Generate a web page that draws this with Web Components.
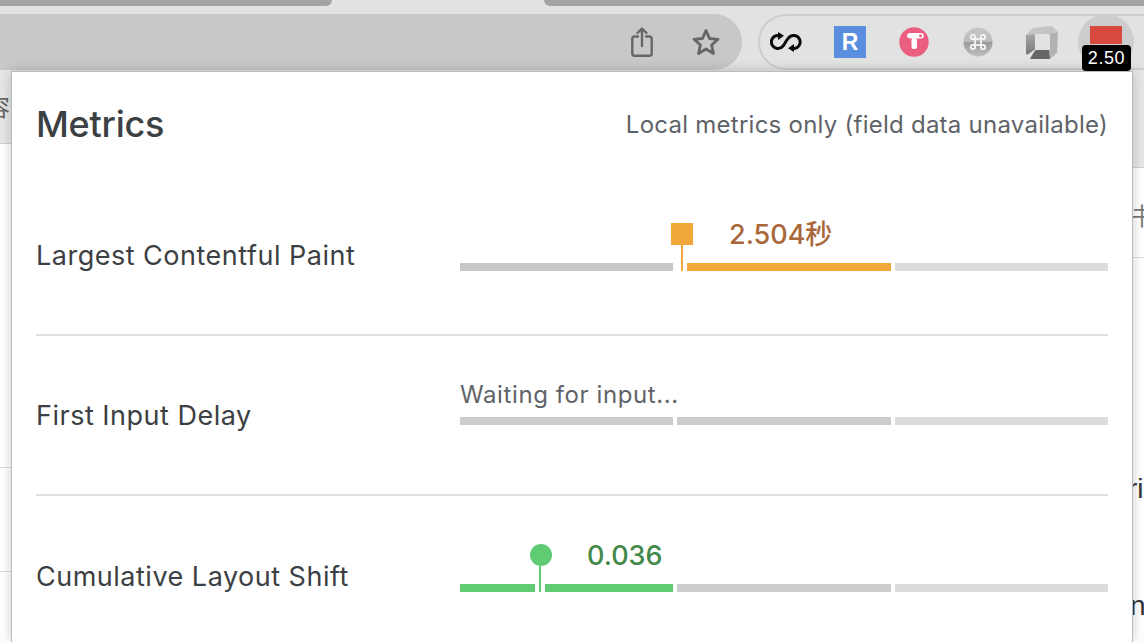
<!DOCTYPE html>
<html>
<head>
<meta charset="utf-8">
<title>Metrics</title>
<style>
  html, body { margin: 0; height: 100%; overflow: hidden; background: #fff; }
  body { font-family: "Inter", "Liberation Sans", "Noto Sans CJK SC", sans-serif; }
</style>
</head>
<body>
<browser-window>
  <metrics-popup>
    <metric-row label="Largest Contentful Paint" value="2.504秒" state="warn" shape="square"
      segs="good,warn,rest" pos="221"></metric-row>
    <metric-row label="First Input Delay" waiting="Waiting for input..." segs="idle,idle,rest"></metric-row>
    <metric-row label="Cumulative Layout Shift" value="0.036" state="good" shape="circle"
      segs="good-on,idle,rest" pos="79" last></metric-row>
  </metrics-popup>
</browser-window>

<script>
class BrowserWindow extends HTMLElement {
  constructor() {
    super();
    this.attachShadow({ mode: 'open' });
    this.shadowRoot.innerHTML = `
    <style>
      :host { display: block; position: relative; width: 1144px; height: 642px; overflow: hidden; background: #fff; font-family: "Inter", "Liberation Sans", "Noto Sans CJK SC", sans-serif; }
      .tabs { display: flex; height: 6px; background: #e2e2e2; }
      .tab { background: #a3a3a3; }
      .tab.one { width: 332px; border-radius: 0 0 10px 0; }
      .tab.two { flex: 1; margin-left: 212px; border-radius: 0 0 0 10px; }
      .bar { display: flex; align-items: flex-end; height: 64px; background: #e2e2e2; box-sizing: border-box; }
      .url { flex: none; width: 742px; height: 56px; background: #c8c8c8; border-radius: 0 28px 28px 0; display: flex; align-items: center; justify-content: flex-end; gap: 38px; padding-right: 21px; box-sizing: border-box; }
      .exts { flex: 1; margin-left: 16px; height: 56px; border: 2px solid #cdcdcd; border-right: 0; border-radius: 28px 0 0 28px; box-sizing: border-box; display: flex; align-items: center; padding-left: 6px; gap: 24px; }
      .ext { width: 40px; height: 40px; display: flex; align-items: center; justify-content: center; flex: none; }
      .ext svg { display: block; }
      .badge-ext { position: absolute; left: 1078px; top: 14px; width: 56px; height: 56px; border-radius: 50%; background: #cdcdcd; }
      .badge-ext i { position: absolute; left: 12px; top: 12px; width: 32px; height: 18px; background: #d64a40; }
      .badge-ext b { position: absolute; left: 4px; top: 31px; width: 49px; height: 26px; border-radius: 4px; background: #000; color: #fff; font: 400 18px/27px "Liberation Sans", sans-serif; text-align: center; letter-spacing: .6px; z-index: 2; }
      .page { position: relative; height: 572px; color: #555; }
      .strip { height: 74px; background: #e6e6e6; border-bottom: 1px solid #cfcfcf; box-sizing: border-box; font-size: 24px; overflow: hidden; }
      .strip span { display: block; color: #666; font-family: "Noto Sans CJK SC", sans-serif; margin: 22px 0 0 -14px; line-height: 28px; }
      .side { position: absolute; font: 28px "Liberation Sans", "Noto Sans CJK SC", sans-serif; color: #333; }
      .line { position: absolute; height: 1px; background: #d9d9d9; width: 12px; }
      .line.right { left: 1132px; }
      .line.left { left: 0; }
      .right-strip { position: absolute; left: 1132px; top: 70px; width: 12px; height: 97px; background: #e6e6e6; border-bottom: 1px solid #cfcfcf; }
      .rest-glyph { position: absolute; left: 1131px; top: 197px; color: #777; font: 24px "Noto Sans CJK SC", sans-serif; line-height: 36px; }
      ::slotted(metrics-popup) { position: absolute; left: 11px; top: 71px; }
    </style>
    <div class="tabs"><div class="tab one"></div><div class="tab two"></div></div>
    <div class="bar">
      <div class="url">
        <svg width="22" height="30" viewBox="0 0 22 30" fill="none" stroke="#666" stroke-width="2.400" stroke-linecap="round" stroke-linejoin="round"><path d="M7 9.500H3.500a2.200 2.200 0 0 0-2.200 2.200V26.500a2.200 2.200 0 0 0 2.200 2.200h15a2.200 2.200 0 0 0 2.200-2.200V11.700a2.200 2.200 0 0 0-2.200-2.200H15"/><path d="M11 19V1.800M6.500 6 11 1.500 15.500 6"/></svg>
        <svg width="30" height="30" viewBox="0 0 30 30" fill="none" stroke="#666" stroke-width="2.800" stroke-linejoin="round"><path d="M15 3.500 18.500 11.500 27 12.300 20.600 18 22.500 26.500 15 22 7.500 26.500 9.400 18 3 12.300 11.500 11.500Z"/></svg>
      </div>
      <div class="exts">
        <div class="ext"><svg width="32" height="20" viewBox="0 0 32 20"><path d="M8.500 3.500A6.500 6.500 0 1 0 13 14C15 11.500 16 8.500 18.500 6A6.500 6.500 0 1 1 23.500 16.500" fill="none" stroke="#0a0a0a" stroke-width="3"/><path d="M8 0 14 3.800 8 8Z" fill="#0a0a0a"/><path d="M24 12 18 16.200 24 20Z" fill="#0a0a0a"/></svg></div>
        <div class="ext"><div style="width:32px;height:32px;background:#5a8fdf;color:#fff;font:700 23px/33px 'Liberation Sans',sans-serif;text-align:center">R</div></div>
        <div class="ext"><svg width="30" height="30" viewBox="0 0 30 30"><circle cx="15" cy="15" r="14.700" fill="#ea5e80"/><path d="M8 8.800C8 7 9.500 6 11 6H22a2.600 2.600 0 0 1 0 5.500H11.500C9.500 11.500 8 10.500 8 8.800Z" fill="#fff"/><circle cx="21.500" cy="8.700" r="1.500" fill="#ea5e80"/><rect x="12.500" y="11" width="5.500" height="11" rx="2.200" fill="#fff"/></svg></div>
        <div class="ext"><svg width="30" height="30" viewBox="0 0 30 30"><defs><linearGradient id="cmd" x1="0" y1="0" x2="0" y2="1"><stop offset="0" stop-color="#c8c8c8"/><stop offset=".48" stop-color="#bbb"/><stop offset=".52" stop-color="#999"/><stop offset="1" stop-color="#c0c0c0"/></linearGradient></defs><circle cx="15" cy="15" r="14.500" fill="url(#cmd)"/><g fill="none" stroke="#f4f4f4" stroke-width="1.800"><rect x="12" y="12" width="6" height="6"/><circle cx="10" cy="10" r="2.200"/><circle cx="20" cy="10" r="2.200"/><circle cx="10" cy="20" r="2.200"/><circle cx="20" cy="20" r="2.200"/></g></svg></div>
        <div class="ext"><svg width="32" height="33" viewBox="0 0 32 33"><defs><linearGradient id="boxl" x1="0" y1="0" x2="0" y2="1"><stop offset="0" stop-color="#a8a8a8"/><stop offset="1" stop-color="#777"/></linearGradient></defs><path d="M7 2 26 0 32 6 23 8H9L0 9Z" fill="#c4c4c4"/><path d="M0 9 9 8V24L1 29 0 27Z" fill="url(#boxl)"/><path d="M32 6 31 27 24 33 23 24V8Z" fill="#b2b2b2"/><path d="M9 24H23L24 33H4Z" fill="#666"/><path d="M2 30 9 24" stroke="#eee" stroke-width="1.200"/><rect x="9" y="8" width="15" height="16" rx="1.500" fill="#e2e2e2"/></svg></div>
      </div>
    </div>
    <div class="badge-ext"><i></i><b>2.50</b></div>
    <div class="page">
      <div class="strip"><span>容</span></div>
    </div>
    <div class="right-strip"></div>
    <span class="line right" style="top:257px"></span>
    <span class="line left" style="top:467px"></span>
    <span class="line left" style="top:571px"></span>
    <span class="rest-glyph">书</span>
    <span class="side" style="left:1128px;top:473px">rio</span>
    <span class="side" style="left:1130px;top:590px">n</span>
    <slot></slot>`;
  }
}

class MetricsPopup extends HTMLElement {
  constructor() {
    super();
    this.attachShadow({ mode: 'open' });
    this.shadowRoot.innerHTML = `
    <style>
      :host { display: block; width: 1122px; height: 571px; background: #fff; box-sizing: border-box; border: 1px solid #bcbcbc; border-bottom: 0; box-shadow: 0 0 11px rgba(0,0,0,.2); padding: 0 24px; color: #3c4043; font-family: "Inter", "Liberation Sans", "Noto Sans CJK SC", sans-serif; overflow: hidden; }
      header { display: flex; justify-content: space-between; align-items: center; height: 104px; }
      h1 { margin: 0; font-size: 36px; font-weight: 500; letter-spacing: -.25px; }
      p { margin: 0; font-size: 24px; color: #5f6368; letter-spacing: .25px; }
    </style>
    <header><h1>Metrics</h1><p>Local metrics only (field data unavailable)</p></header>
    <slot></slot>`;
  }
}

class MetricRow extends HTMLElement {
  constructor() {
    super();
    this.attachShadow({ mode: 'open' });
  }
  connectedCallback() {
    const label = this.getAttribute('label');
    const value = this.getAttribute('value');
    const state = this.getAttribute('state');
    const shape = this.getAttribute('shape');
    const waiting = this.getAttribute('waiting');
    const pos = Number(this.getAttribute('pos'));
    const segs = this.getAttribute('segs').split(',');
    const colors = { good: '#c8c8c8', warn: '#f2a73b', rest: '#dcdcdc', idle: '#cccccc', 'good-on': '#5fcc74' };
    const main = { warn: '#f2a73b', good: '#5fcc74' };
    const text = { warn: '#a9673a', good: '#42894a' };

    let top = '';
    if (value) {
      const headLeft = shape === 'circle' ? pos - 9 : pos - 10;
      top = `<div class="pin" style="left:${pos}px;background:${main[state]}"></div>
        <div class="head ${shape}" style="left:${headLeft}px;background:${main[state]}"></div>
        <div class="cut" style="left:${pos - 4}px"></div>
        <div class="cut" style="left:${pos + 2}px"></div>
        <div class="val" style="left:${pos + 48}px;color:${text[state]}">${value}</div>`;
    } else if (waiting) {
      top = `<div class="wait">${waiting}</div>`;
    }
    this.shadowRoot.innerHTML = `
    <style>
      :host { display: flex; align-items: center; height: 160px; box-sizing: border-box; border-bottom: 2px solid #e0e0e0; color: #3c4043; }
      :host([last]) { border-bottom: 0; }
      .name { width: 424px; flex: none; font-size: 27px; letter-spacing: .5px; }
      .chart { position: relative; flex: 1; margin-bottom: 16px; display: flex; flex-direction: column; }
      :host([waiting]) .chart { margin-bottom: 20px; }
      .top { height: 40px; }
      :host([waiting]) .top { height: 32px; }
      .bars { display: flex; gap: 4px; }
      .bars i { flex: 1; height: 8px; }
      .pin { position: absolute; top: 22px; width: 2px; height: 26px; z-index: 1; }
      .head { position: absolute; top: 0; width: 22px; height: 22px; }
      .head.circle { border-radius: 50%; }
      .cut { position: absolute; top: 40px; height: 8px; width: 4px; background: #fff; }
      .val { position: absolute; top: -6px; font: 500 27px/36px "Inter", "Liberation Sans", "Noto Sans CJK SC", sans-serif; }
      .wait { font-size: 24px; line-height: 20px; color: #5f6368; letter-spacing: .6px; }
    </style>
    <div class="name">${label}</div>
    <div class="chart">
      <div class="top">${top}</div>
      <div class="bars">${segs.map(s => `<i style="background:${colors[s]}"></i>`).join('')}</div>
    </div>`;
  }
}

customElements.define('browser-window', BrowserWindow);
customElements.define('metrics-popup', MetricsPopup);
customElements.define('metric-row', MetricRow);
</script>
</body>
</html>
